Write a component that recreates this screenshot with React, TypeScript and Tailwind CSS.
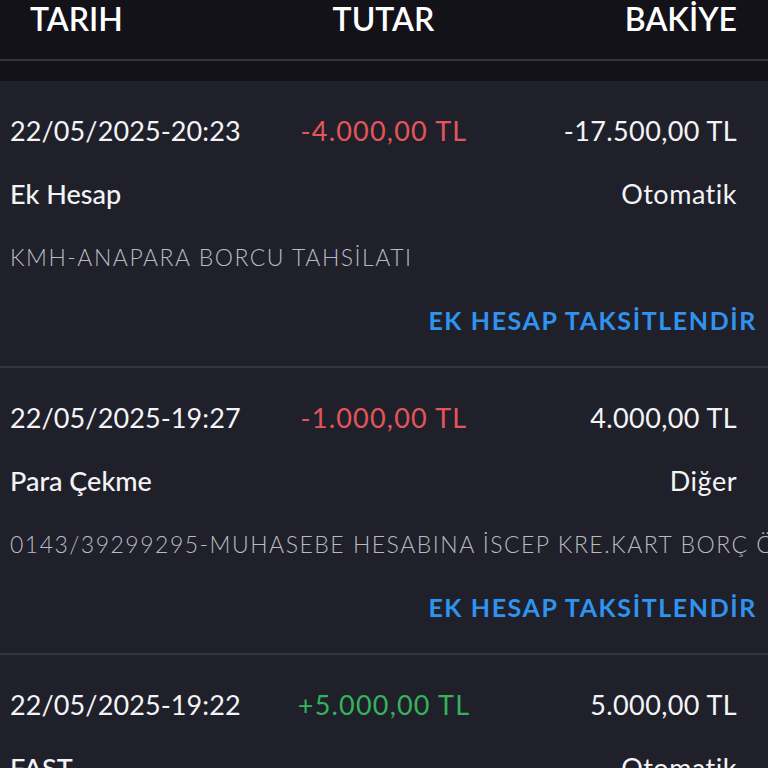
import React from 'react'

interface Tx {
  date: string
  amount: string
  sign: 'neg' | 'pos'
  balance: string
  type: string
  channel: string
  desc: string
  action?: string
}

const txs: Tx[] = [
  {
    date: '22/05/2025-20:23',
    amount: '-4.000,00 TL',
    sign: 'neg',
    balance: '-17.500,00 TL',
    type: 'Ek Hesap',
    channel: 'Otomatik',
    desc: 'KMH-ANAPARA BORCU TAHSİLATI',
    action: 'EK HESAP TAKSİTLENDİR',
  },
  {
    date: '22/05/2025-19:27',
    amount: '-1.000,00 TL',
    sign: 'neg',
    balance: '4.000,00 TL',
    type: 'Para Çekme',
    channel: 'Diğer',
    desc: '0143/39299295-MUHASEBE HESABINA İSCEP KRE.KART BORÇ ÖDEME',
    action: 'EK HESAP TAKSİTLENDİR',
  },
  {
    date: '22/05/2025-19:22',
    amount: '+5.000,00 TL',
    sign: 'pos',
    balance: '5.000,00 TL',
    type: 'FAST',
    channel: 'Otomatik',
    desc: 'FAST GELEN',
  },
]

function TxRow({ tx }: { tx: Tx }) {
  return (
    <div className="border-b-2 border-[#343541] pt-[19px] pb-[14px]">
      <div className="grid h-[63px] grid-cols-[1fr_auto_1fr] items-center px-[10px] text-[27px]">
        <span className="tracking-[0.1px] text-[#f4f4f6]">{tx.date}</span>
        <span className={tx.sign === 'neg' ? 'text-[#e4555b] tracking-[1.2px]' : 'text-[#35b25b] tracking-[1.2px]'}>
          {tx.amount}
        </span>
        <span className="pr-[21px] text-right tracking-[0.4px] text-[#f4f4f6]">{tx.balance}</span>
      </div>
      <div className="flex h-[63px] items-center justify-between pl-[10px] pr-[31px] text-[27px] font-medium text-[#f4f4f6]">
        <span>{tx.type}</span>
        <span className="font-normal tracking-[0.5px]">{tx.channel}</span>
      </div>
      <div className="flex h-[63px] items-center overflow-hidden whitespace-nowrap pl-[10px] text-[23px] font-light tracking-[1.5px] text-[#b9bac2]">
        {tx.desc}
      </div>
      <div className="flex h-[63px] items-center justify-end pr-[11px] text-[25px] font-bold tracking-[1.6px] text-[#2f93ef]">
        {tx.action}
      </div>
    </div>
  )
}

export default function App() {
  return (
    <div
      className="h-[768px] w-[768px] overflow-hidden bg-[#1f202a]"
      style={{ fontFamily: 'Lato, "Noto Sans", sans-serif' }}
    >
      <div className="bg-[#131219]">
        <div className="grid h-[59px] grid-cols-[1fr_auto_1fr] items-start pl-[30px] pr-[31px] text-[32px] font-semibold text-white">
          <span className="flex h-[38px] items-center">TARIH</span>
          <span className="flex h-[38px] items-center">TUTAR</span>
          <span className="flex h-[38px] items-center justify-end">BAKİYE</span>
        </div>
        <div className="h-[2px] bg-[#33333d]" />
        <div className="h-[20px]" />
      </div>
      {txs.map((tx) => (
        <TxRow key={tx.date} tx={tx} />
      ))}
    </div>
  )
}
